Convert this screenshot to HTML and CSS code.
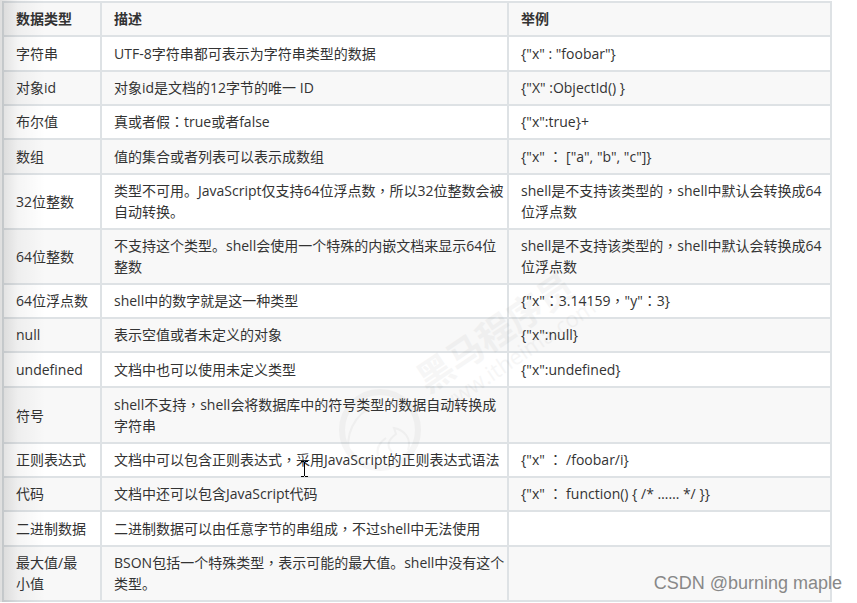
FILE: index.html
```html
<!doctype html>
<html lang="zh-CN">
  <head>
    <meta charset="UTF-8" />
    <meta name="viewport" content="width=device-width, initial-scale=1.0" />
    <title>数据类型</title>
    <link rel="stylesheet" href="styles.css">
  </head>
  <body>
    <div class="page">
      <table class="types">
        <colgroup>
          <col class="col-type" />
          <col />
          <col class="col-example" />
        </colgroup>
        <thead>
          <tr>
            <th>数据类型</th>
            <th>描述</th>
            <th>举例</th>
          </tr>
        </thead>
        <tbody>
          <tr class="roomy">
            <td>字符串</td>
            <td>UTF-8字符串都可表示为字符串类型的数据</td>
            <td>{"x" : "foobar"}</td>
          </tr>
          <tr>
            <td>对象id</td>
            <td>对象id是文档的12字节的唯一 ID</td>
            <td>{"X" :ObjectId() }</td>
          </tr>
          <tr>
            <td>布尔值</td>
            <td>真或者假<span class="punct" lang="zh-TW">：</span>true或者false</td>
            <td>{"x":true}+</td>
          </tr>
          <tr class="roomy">
            <td>数组</td>
            <td>值的集合或者列表可以表示成数组</td>
            <td>{"x" <span class="punct" lang="zh-TW">：</span> ["a", "b", "c"]}</td>
          </tr>
          <tr>
            <td>32位整数</td>
            <td>类型不可用。JavaScript仅支持64位浮点数<span class="punct" lang="zh-TW">，</span>所以32位整数会被<br />自动转换。</td>
            <td>shell是不支持该类型的<span class="punct" lang="zh-TW">，</span>shell中默认会转换成64<br />位浮点数</td>
          </tr>
          <tr>
            <td>64位整数</td>
            <td>不支持这个类型。shell会使用一个特殊的内嵌文档来显示64位<br />整数</td>
            <td>shell是不支持该类型的<span class="punct" lang="zh-TW">，</span>shell中默认会转换成64<br />位浮点数</td>
          </tr>
          <tr>
            <td>64位浮点数</td>
            <td>shell中的数字就是这一种类型</td>
            <td>{"x"<span class="punct" lang="zh-TW">：</span>3.14159<span class="punct" lang="zh-TW">，</span>"y"<span class="punct" lang="zh-TW">：</span>3}</td>
          </tr>
          <tr>
            <td>null</td>
            <td>表示空值或者未定义的对象</td>
            <td>{"x":null}</td>
          </tr>
          <tr class="roomy">
            <td>undefined</td>
            <td>文档中也可以使用未定义类型</td>
            <td>{"x":undefined}</td>
          </tr>
          <tr class="roomy">
            <td>符号</td>
            <td>shell不支持<span class="punct" lang="zh-TW">，</span>shell会将数据库中的符号类型的数据自动转换成<br />字符串</td>
            <td></td>
          </tr>
          <tr>
            <td>正则表达式</td>
            <td>文档中可以包含正则表达式<span class="punct" lang="zh-TW">，</span>采用JavaScript的正则表达式语法</td>
            <td>{"x" <span class="punct" lang="zh-TW">：</span> /foobar/i}</td>
          </tr>
          <tr>
            <td>代码</td>
            <td>文档中还可以包含JavaScript代码</td>
            <td>{"x" <span class="punct" lang="zh-TW">：</span> function() { /* …… */ }}</td>
          </tr>
          <tr class="roomy">
            <td>二进制数据</td>
            <td>二进制数据可以由任意字节的串组成<span class="punct" lang="zh-TW">，</span>不过shell中无法使用</td>
            <td></td>
          </tr>
          <tr>
            <td>最大值/最<br />小值</td>
            <td>BSON包括一个特殊类型<span class="punct" lang="zh-TW">，</span>表示可能的最大值。shell中没有这个<br />类型。</td>
            <td></td>
          </tr>
        </tbody>
      </table>

      <div class="edge-shade"></div>

      <svg class="brand-mark" width="300" height="210" viewBox="0 0 300 210" aria-hidden="true">
        <circle cx="60" cy="160" r="38" fill="none" stroke="#000" stroke-width="6" />
        <path d="M30 186C24 166 34 144 54 136M72 182C66 176 68 170 76 164L74 158C84 160 92 168 88 180M58 186C56 178 60 172 66 168" fill="none" stroke="#000" stroke-width="2" />
        <g transform="translate(108 124) rotate(-34)">
          <text class="brand-name" x="0" y="0">黑马程序员</text>
          <text class="brand-url" x="3" y="26">www.itheima.com</text>
        </g>
      </svg>

      <svg class="cursor" width="7" height="16" viewBox="0 0 7 16" aria-hidden="true">
        <path d="M0 .5H3M4 .5H7M3.500 1V15M0 15.500H3M4 15.500H7" fill="none" stroke="#000" />
      </svg>

      <div class="credit">CSDN @burning maple</div>
    </div>
  </body>
</html>
```

FILE: styles.css
```css
body {
  margin: 0;
  background: #fff;
  color: #333;
  font-family: "Open Sans", "Noto Sans CJK SC", sans-serif;
  font-size: 14px;
  line-height: 21px;
}

.page {
  position: relative;
  padding: 1px 25px 0 2px;
}

.types {
  width: 100%;
  table-layout: fixed;
  border-collapse: collapse;
}

.col-type {
  width: 98px;
}

.col-example {
  width: 39%;
}

.types th,
.types td {
  padding: 5px 0 6px 12px;
  border: 2px solid #dee2e5;
  text-align: left;
  vertical-align: middle;
  white-space: nowrap;
}

.types th {
  background: #f8f8f8;
  font-weight: bold;
}

.types tbody tr:nth-child(even) {
  background: #f8f8f8;
}

.types .roomy td {
  padding-top: 6px;
}

.punct {
  font-family: "Noto Sans CJK TC", sans-serif;
}

/* soft shade along the left edge */
.edge-shade {
  position: absolute;
  top: 0;
  bottom: 0;
  left: 0;
  width: 45px;
  background: linear-gradient(to right, rgba(0, 0, 0, 0.13), rgba(0, 0, 0, 0.04) 40%, transparent);
  pointer-events: none;
}

.brand-mark {
  position: absolute;
  top: 270px;
  left: 320px;
  overflow: visible;
  opacity: 0.03;
  pointer-events: none;
}

.brand-name {
  font-family: "Noto Sans CJK SC", sans-serif;
  font-size: 36px;
  font-weight: bold;
}

.brand-url {
  font-family: "Open Sans", sans-serif;
  font-size: 22px;
}

.cursor {
  position: absolute;
  top: 461px;
  left: 301px;
}

.credit {
  position: absolute;
  right: 15px;
  bottom: 8px;
  color: #888;
  font-family: "Liberation Sans", sans-serif;
  font-size: 18px;
}
```
